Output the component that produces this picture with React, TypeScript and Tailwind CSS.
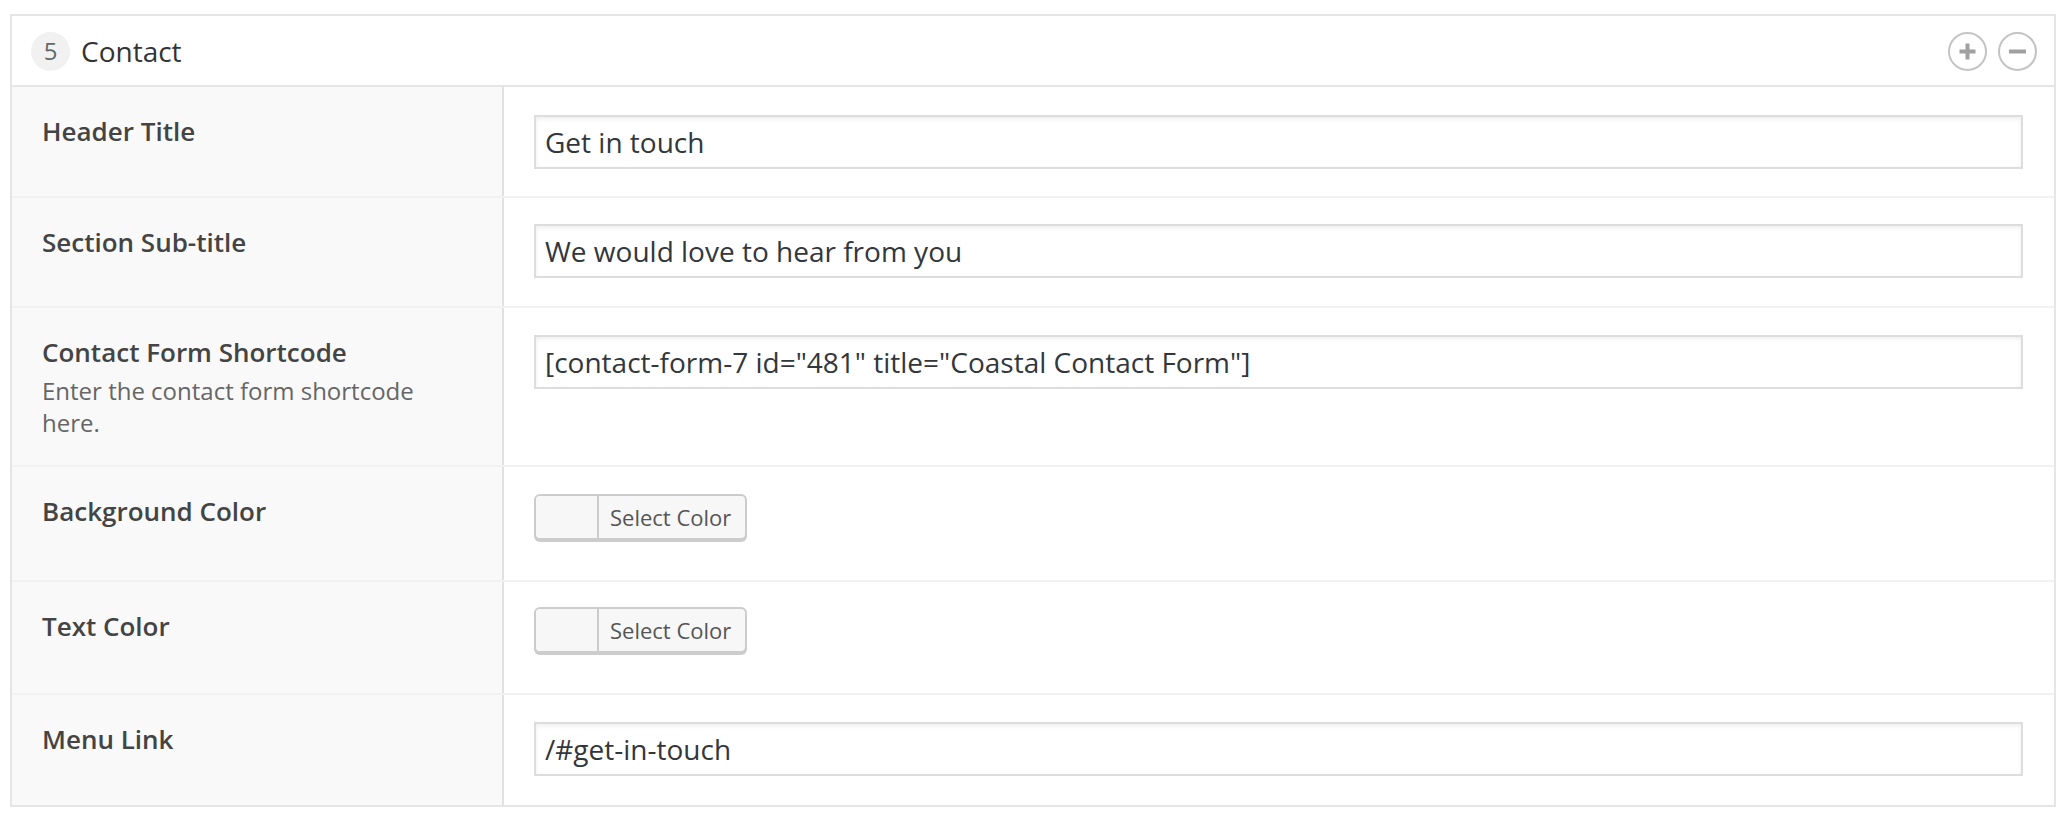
import React from "react";

const font = { fontFamily: '"Open Sans", "Noto Sans", "Liberation Sans", sans-serif' };

function Label({ title, desc }: { title: string; desc?: string }) {
  return (
    <div className="w-[492px] shrink-0 bg-[#f9f9f9] border-r-2 border-[#e1e1e1] pl-[30px] pr-[60px] pt-[24px]">
      <div className="text-[26px] leading-[40px] font-semibold text-[#444]">{title}</div>
      {desc && (
        <div className="mt-[3px] text-[24px] leading-[32px] text-[#666]">{desc}</div>
      )}
    </div>
  );
}

function TextField({ value }: { value: string }) {
  return (
    <div className="w-full h-[54px] border-2 border-[#dddddd] bg-white shadow-[inset_0_2px_4px_rgba(0,0,0,0.07)] pl-[9px] flex items-center text-[28px] text-[#32373c]">
      {value}
    </div>
  );
}

function ColorButton() {
  return (
    <div className="flex w-[213px] h-[46px] rounded-[6px] border-2 border-[#cccccc] bg-[#f7f7f7] shadow-[0_2px_0_#cccccc] overflow-hidden">
      <div className="w-[63px] h-full border-r-2 border-[#cccccc] bg-[#f7f7f7]" />
      <div className="flex-1 flex items-center pl-[11px] text-[22px] text-[#555]">Select Color</div>
    </div>
  );
}

function Row({
  h,
  top,
  title,
  desc,
  children,
  first,
}: {
  h: string;
  top: string;
  title: string;
  desc?: string;
  children: React.ReactNode;
  first?: boolean;
}) {
  return (
    <div className={`flex ${h} ${first ? "" : "border-t-2 border-[#f1f1f1]"}`}>
      <Label title={title} desc={desc} />
      <div className={`flex-1 pl-[30px] pr-[31px] ${top}`}>{children}</div>
    </div>
  );
}

export default function App() {
  return (
    <div className="w-[2066px] h-[816px] bg-white" style={font}>
      <div className="ml-[10px] mt-[14px] w-[2046px] border-2 border-[#e5e5e5] bg-white">
        <div className="h-[71px] flex items-center pl-[19px] pr-[17px] border-b-2 border-[#e5e5e5]">
          <div className="w-[39px] h-[39px] rounded-full bg-[#f1f1f1] flex items-center justify-center text-[24px] text-[#666] mt-[1px]">
            5
          </div>
          <div className="ml-[11px] text-[28px] text-[#333]">Contact</div>
          <div className="ml-auto flex items-center gap-[11px] mt-[2px]">
            <svg width="39" height="39" viewBox="0 0 39 39">
              <circle cx="19.5" cy="19.5" r="18.5" fill="white" stroke="#c4c4c4" strokeWidth="2" />
              <rect x="11.5" y="17.5" width="16" height="4" fill="#a0a0a0" />
              <rect x="17.5" y="11.5" width="4" height="16" fill="#a0a0a0" />
            </svg>
            <svg width="39" height="39" viewBox="0 0 39 39">
              <circle cx="19.5" cy="19.5" r="18.5" fill="white" stroke="#c4c4c4" strokeWidth="2" />
              <rect x="11" y="17.5" width="17" height="4" fill="#a0a0a0" />
            </svg>
          </div>
        </div>

        <Row first h="h-[109px]" top="pt-[28px]" title="Header Title">
          <TextField value="Get in touch" />
        </Row>
        <Row h="h-[110px]" top="pt-[26px]" title="Section Sub-title">
          <TextField value="We would love to hear from you" />
        </Row>
        <Row
          h="h-[159px]"
          top="pt-[27px]"
          title="Contact Form Shortcode"
          desc="Enter the contact form shortcode here."
        >
          <TextField value={'[contact-form-7 id="481" title="Coastal Contact Form"]'} />
        </Row>
        <Row h="h-[115px]" top="pt-[27px]" title="Background Color">
          <ColorButton />
        </Row>
        <Row h="h-[113px]" top="pt-[25px]" title="Text Color">
          <ColorButton />
        </Row>
        <Row h="h-[112px]" top="pt-[27px]" title="Menu Link">
          <TextField value="/#get-in-touch" />
        </Row>
      </div>
    </div>
  );
}
